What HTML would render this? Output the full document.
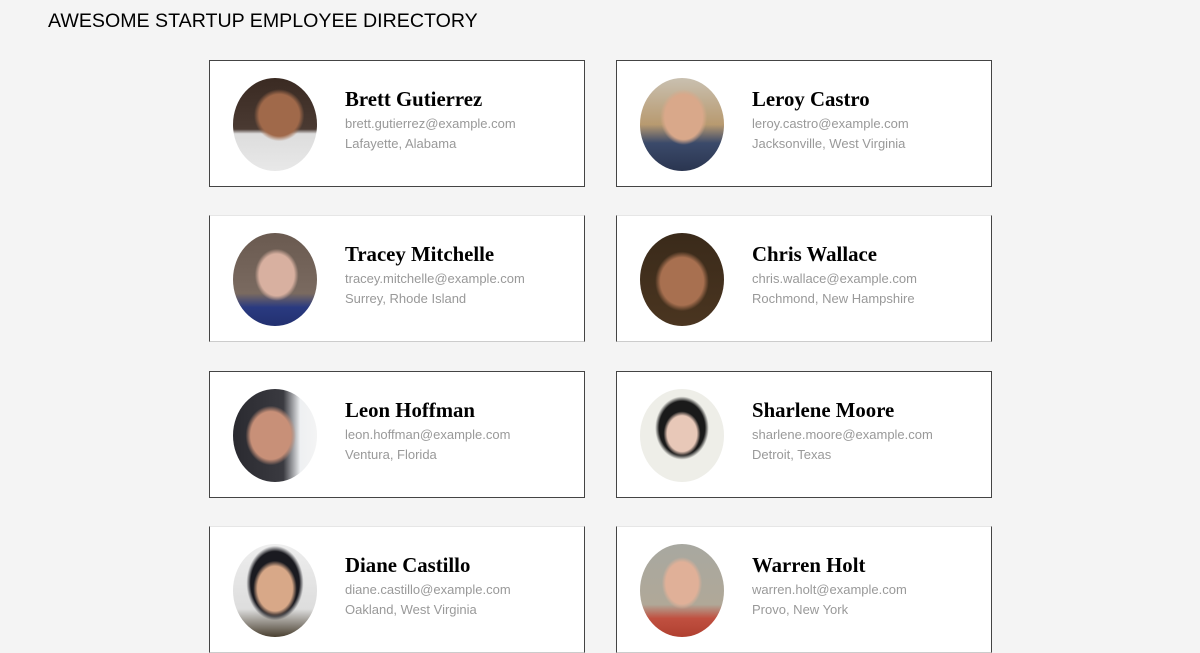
<!DOCTYPE html>
<html><head><style>
body{margin:0;background:#f4f4f4;width:1200px;height:631px;overflow:hidden;position:relative;font-family:"Liberation Sans",Arial,sans-serif}
h1{position:absolute;left:48px;top:10px;margin:0;font-weight:normal;font-size:19.6px;color:#000;letter-spacing:0}
.c{position:absolute;width:374px;height:125px;background:#fff;border:1px solid #444}
.c.l2{border-top-color:#e6e6e6;border-bottom-color:#ccc}
.av{position:absolute;left:23px;top:17px;width:84px;height:93px;border-radius:50%;overflow:hidden}
.n{position:absolute;left:135px;top:27px;font-family:"Liberation Serif",serif;font-weight:bold;font-size:20.8px;color:#000}
.e{position:absolute;left:135px;top:55px;font-size:13px;color:#999}
.p{position:absolute;left:135px;top:75px;font-size:13px;color:#999}
</style></head><body>
<h1>AWESOME STARTUP EMPLOYEE DIRECTORY</h1>

<div class="c" style="left:209px;top:60px"><div class="av" style="background:radial-gradient(ellipse 30% 28% at 55% 40%,#a0694a 80%,transparent 100%),linear-gradient(#3a2a22 0,#4a3a32 55%,#ddd 60%,#e8e8e8 100%)"></div><div class="n">Brett Gutierrez</div><div class="e">brett.gutierrez@example.com</div><div class="p">Lafayette, Alabama</div></div>
<div class="c" style="left:616px;top:60px"><div class="av" style="background:radial-gradient(ellipse 28% 30% at 52% 42%,#d9a88a 80%,transparent 100%),linear-gradient(#c9c0b0 0,#b89a70 50%,#3b4a6a 70%,#2a3550 100%)"></div><div class="n">Leroy Castro</div><div class="e">leroy.castro@example.com</div><div class="p">Jacksonville, West Virginia</div></div>

<div class="c l2" style="left:209px;top:215px"><div class="av" style="background:radial-gradient(ellipse 26% 28% at 52% 45%,#d8b0a0 80%,transparent 100%),linear-gradient(#6a5a50 0,#7a6a60 65%,#2a3a80 80%,#223070 100%)"></div><div class="n">Tracey Mitchelle</div><div class="e">tracey.mitchelle@example.com</div><div class="p">Surrey, Rhode Island</div></div>
<div class="c l2" style="left:616px;top:215px"><div class="av" style="background:radial-gradient(ellipse 32% 32% at 50% 52%,#a87050 80%,transparent 100%),linear-gradient(#3a2a1a 0,#4a3520 100%)"></div><div class="n">Chris Wallace</div><div class="e">chris.wallace@example.com</div><div class="p">Rochmond, New Hampshire</div></div>

<div class="c" style="left:209px;top:371px"><div class="av" style="background:radial-gradient(ellipse 30% 32% at 45% 50%,#c89078 80%,transparent 100%),linear-gradient(90deg,#2a2a30 0,#3a3a40 60%,#eef0f2 80%,#f4f4f4 100%)"></div><div class="n">Leon Hoffman</div><div class="e">leon.hoffman@example.com</div><div class="p">Ventura, Florida</div></div>
<div class="c" style="left:616px;top:371px"><div class="av" style="background:radial-gradient(ellipse 22% 24% at 50% 48%,#e8c8b8 80%,transparent 100%),radial-gradient(ellipse 32% 34% at 50% 42%,#1a1a1a 85%,transparent 100%),#eeeee8"></div><div class="n">Sharlene Moore</div><div class="e">sharlene.moore@example.com</div><div class="p">Detroit, Texas</div></div>

<div class="c l2" style="left:209px;top:526px"><div class="av" style="background:radial-gradient(ellipse 26% 30% at 50% 48%,#d8a888 80%,transparent 100%),radial-gradient(ellipse 34% 40% at 50% 42%,#1a1a20 85%,transparent 100%),linear-gradient(#eee 0,#ddd 70%,#4a4030 100%)"></div><div class="n">Diane Castillo</div><div class="e">diane.castillo@example.com</div><div class="p">Oakland, West Virginia</div></div>
<div class="c l2" style="left:616px;top:526px"><div class="av" style="background:radial-gradient(ellipse 24% 28% at 50% 42%,#e0b098 80%,transparent 100%),linear-gradient(#a8a8a0 0,#b0a898 65%,#c05040 80%,#b04030 100%)"></div><div class="n">Warren Holt</div><div class="e">warren.holt@example.com</div><div class="p">Provo, New York</div></div>
</body></html>
